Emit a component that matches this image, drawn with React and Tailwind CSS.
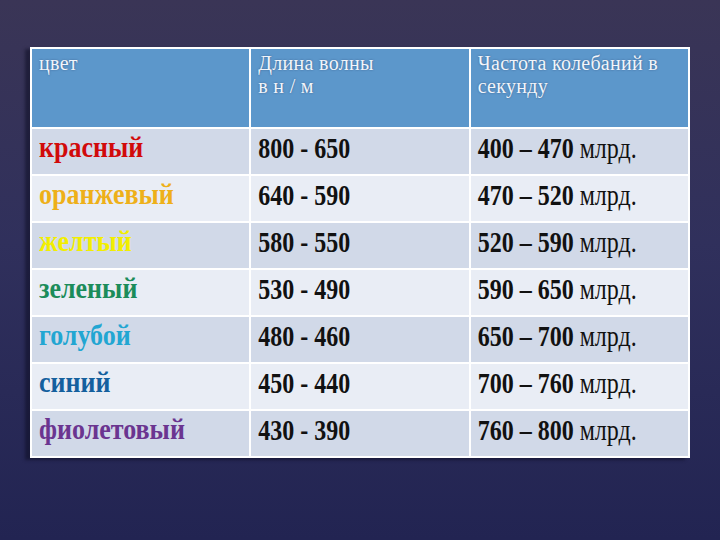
import React from 'react'

const rows = [
  { name: 'красный', color: 'text-[#d10a0a]', wave: '800 - 650', freq: '400 – 470' },
  { name: 'оранжевый', color: 'text-[#eeb019]', wave: '640 - 590', freq: '470 – 520' },
  { name: 'желтый', color: 'text-[#f2ee00]', wave: '580 - 550', freq: '520 – 590' },
  { name: 'зеленый', color: 'text-[#1b8c5a]', wave: '530 - 490', freq: '590 – 650' },
  { name: 'голубой', color: 'text-[#22a6d2]', wave: '480 - 460', freq: '650 – 700' },
  { name: 'синий', color: 'text-[#14609e]', wave: '450 - 440', freq: '700 – 760' },
  { name: 'фиолетовый', color: 'text-[#6b3590]', wave: '430 - 390', freq: '760 – 800' },
]

const serif = "font-['Liberation_Serif','Times_New_Roman',serif]"

const App = () => {
  return (
    <div className={`w-[720px] h-[540px] pt-[47px] pl-[30px] bg-[linear-gradient(180deg,#3a3556_0%,#30305c_45%,#222452_100%)] ${serif}`}>
      <div className="w-[660px] bg-white p-[2px] grid grid-cols-3 gap-[2px] shadow-[-5px_2px_3px_rgba(12,12,35,0.55)]">
        {/* Header */}
        {['цвет', 'Длина волны\nв н / м', 'Частота колебаний в\nсекунду'].map((h, i) => (
          <div key={i} className={`h-[78px] bg-[#5c97cb] px-[7px] pt-[3px] text-[20px] leading-[23px] tracking-[0.3px] text-[#f1f5fb] whitespace-pre-line [text-shadow:0_0_2px_rgba(40,60,100,0.6)] ${serif}`}>
            {h}
          </div>
        ))}

        {/* Lignes */}
        {rows.map((r, i) => {
          const bg = i % 2 === 0 ? 'bg-[#d1d9e8]' : 'bg-[#e9edf5]'
          return (
            <React.Fragment key={r.name}>
              <div className={`h-[45px] ${bg} px-[7px] pt-[5px]`}>
                <span className={`inline-block origin-top scale-y-[1.15] text-[26px] leading-[24px] font-bold ${r.color} ${serif}`}>{r.name}</span>
              </div>
              <div className={`h-[45px] ${bg} px-[7px] pt-[4px]`}>
                <span className={`inline-block origin-top scale-y-[1.25] text-[24px] leading-[24px] font-bold text-[#111] ${serif}`}>{r.wave}</span>
              </div>
              <div className={`h-[45px] ${bg} px-[7px] pt-[4px]`}>
                <span className={`inline-block origin-top scale-y-[1.25] text-[24px] leading-[24px] text-[#111] ${serif}`}>
                  <b>{r.freq}</b> млрд.
                </span>
              </div>
            </React.Fragment>
          )
        })}
      </div>
    </div>
  )
}

export default App
